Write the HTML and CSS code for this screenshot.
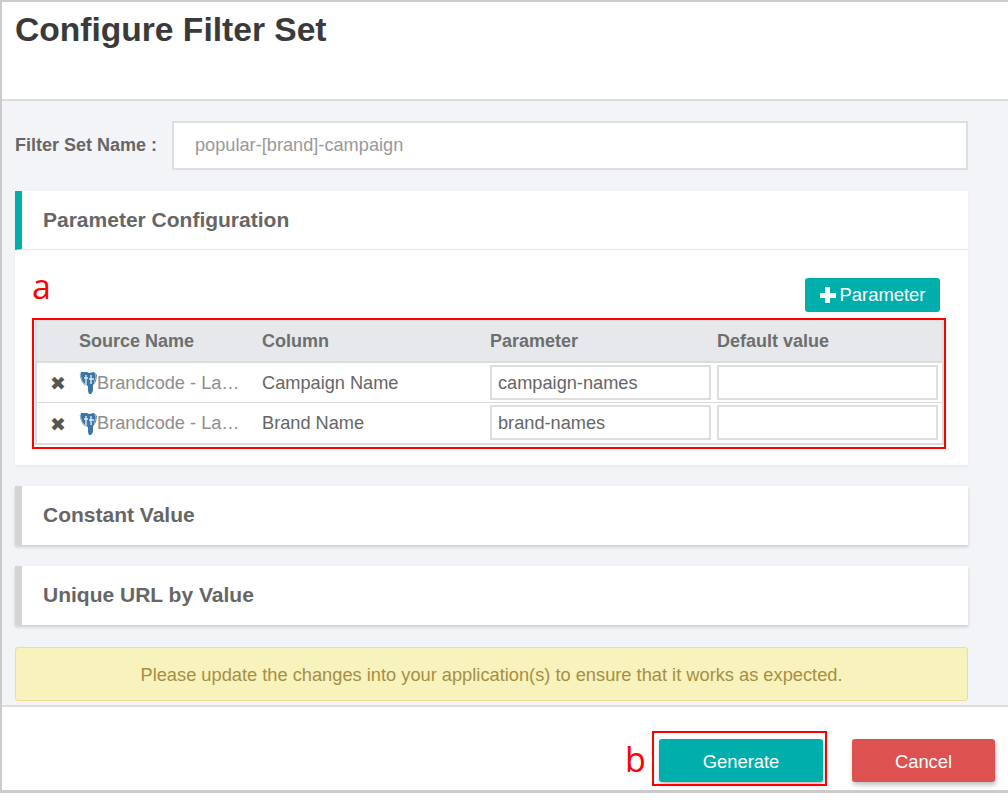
FILE: index.html
```html
<!DOCTYPE html>
<html lang="en">

<head>
	<meta charset="utf-8" />
	<title>Configure Filter Set</title>
	<link rel="stylesheet" href="styles.css">
</head>

<body>
	<div class="frame">
		<header class="top">
			<h1>Configure Filter Set</h1>
		</header>

		<main class="content">
			<div class="name-row">
				<label class="name-label">Filter Set Name :</label>
				<div class="name-input">popular-[brand]-campaign</div>
			</div>

			<section class="panel panel-open">
				<h2 class="panel-title">Parameter Configuration</h2>
				<div class="panel-body">
					<div class="toolbar">
						<button class="add-btn"><span class="plus"></span>Parameter</button>
					</div>
					<div class="params">
						<div class="param-row param-head">
							<span></span>
							<span>Source Name</span>
							<span>Column</span>
							<span>Parameter</span>
							<span>Default value</span>
						</div>
						<div class="param-row">
							<span class="cross">✖</span>
							<span class="source">
								<svg class="pg" viewBox="0 0 18 24" width="18" height="24"><path d="M2 1h6l2 1 5-1 3 3-1 6-2 3-1 1v6l-2 3h-2l-1-3v-5l-3-1-3-3-2-6z" fill="#3b76a6"/><path d="M1 3l2 7 3 3M16 2l1 4-2 6" stroke="#9db9cf" fill="none"/><path d="M7 4v11M12 4v9M5 7h4M10 8h5" stroke="#dfe9f1" stroke-width="1.4" fill="none"/></svg>
								<span class="source-name">Brandcode - La…</span>
							</span>
							<span class="col-name">Campaign Name</span>
							<div class="cell-input">campaign-names</div>
							<div class="cell-input"></div>
						</div>
						<div class="param-row">
							<span class="cross">✖</span>
							<span class="source">
								<svg class="pg" viewBox="0 0 18 24" width="18" height="24"><path d="M2 1h6l2 1 5-1 3 3-1 6-2 3-1 1v6l-2 3h-2l-1-3v-5l-3-1-3-3-2-6z" fill="#3b76a6"/><path d="M1 3l2 7 3 3M16 2l1 4-2 6" stroke="#9db9cf" fill="none"/><path d="M7 4v11M12 4v9M5 7h4M10 8h5" stroke="#dfe9f1" stroke-width="1.4" fill="none"/></svg>
								<span class="source-name">Brandcode - La…</span>
							</span>
							<span class="col-name">Brand Name</span>
							<div class="cell-input">brand-names</div>
							<div class="cell-input"></div>
						</div>
					</div>
				</div>
			</section>

			<section class="panel">
				<h2 class="panel-title">Constant Value</h2>
			</section>

			<section class="panel">
				<h2 class="panel-title">Unique URL by Value</h2>
			</section>

			<div class="notice">Please update the changes into your application(s) to ensure that it works as expected.</div>
		</main>

		<footer class="bottom">
			<button class="btn btn-generate">Generate</button>
			<button class="btn btn-cancel">Cancel</button>
		</footer>
	</div>

	<!-- red marks put on top of the screenshot -->
	<span class="mark mark-a">a</span>
	<div class="mark-box mark-box-a"></div>
	<span class="mark mark-b">b</span>
	<div class="mark-box mark-box-b"></div>
</body>

</html>
```

FILE: styles.css
```css
body {
	margin: 0;
	background: #fff;
	font-family: "Liberation Sans", Arial, sans-serif;
	color: #666;
	position: relative;
	height: 804px;
	overflow: hidden;
}

.frame {
	width: 1008px;
	height: 793px;
	box-sizing: border-box;
	border: 2px solid #cbcbcb;
	border-bottom-width: 3px;
	border-right: 0;
	display: flex;
	flex-direction: column;
	background: #fff;
}

.top {
	height: 99px;
	flex: none;
	box-sizing: border-box;
	border-bottom: 2px solid #dcdcdc;
	padding: 8px 0 0 13px;
}

h1 {
	margin: 0;
	font-size: 33.6px;
	line-height: 39px;
	font-weight: bold;
	color: #3a3a3a;
}

.content {
	height: 604px;
	flex: none;
	box-sizing: border-box;
	background: #f3f4f8;
	padding: 20px 40px 0 13px;
}

.name-row {
	display: flex;
	align-items: center;
	height: 49px;
}

.name-label {
	width: 157px;
	font-size: 18px;
	font-weight: bold;
	color: #666;
}

.name-input {
	flex: 1;
	height: 49px;
	box-sizing: border-box;
	border: 2px solid #dedfe1;
	background: #fff;
	padding-left: 21px;
	font-size: 18.2px;
	line-height: 45px;
	color: #999;
}

.panel {
	margin-top: 21px;
	border-left: 7px solid #d4d4d4;
	background: #fff;
	box-shadow: 0 2px 3px rgba(0, 0, 0, 0.16);
}

.panel-open {
	border-left: 0;
	box-shadow: 0 2px 3px rgba(0, 0, 0, 0.04);
}

.panel-title {
	margin: 0;
	height: 59px;
	box-sizing: border-box;
	padding-left: 21px;
	font-size: 21px;
	line-height: 57px;
	font-weight: bold;
	color: #666;
}

.panel-open .panel-title {
	border-left: 7px solid #00aeac;
	border-bottom: 1px solid #e4eaea;
}

.panel-body {
	height: 215px;
	box-sizing: border-box;
	padding: 28px 24px 0 20px;
}

.toolbar {
	display: flex;
	justify-content: flex-end;
	padding-right: 4px;
}

.add-btn {
	width: 135px;
	height: 34px;
	border: 0;
	border-radius: 3px;
	background: #00aeac;
	color: #fff;
	font-family: inherit;
	font-size: 18.4px;
	display: flex;
	align-items: center;
	justify-content: center;
	gap: 4px;
	padding: 0;
}

.plus {
	width: 16px;
	height: 16px;
	background:
		linear-gradient(#fff, #fff) center / 16px 5px no-repeat,
		linear-gradient(#fff, #fff) center / 5px 16px no-repeat;
}

.params {
	margin-top: 8px;
	border: 2px solid #dcdcdc;
	border-top-width: 1px;
	border-bottom-width: 2px;
	font-size: 18px;
}

.param-row {
	display: grid;
	grid-template-columns: 42px 183px 228px 227px 221px;
	align-items: center;
	height: 39px;
	border-bottom: 1px solid #dcdcdc;
}

.param-row:last-child {
	height: 40px;
	border-bottom: 0;
}

.param-head {
	height: 40px;
	background: #e6e8eb;
	border-bottom: 2px solid #dcdcdc;
	font-size: 18px;
	font-weight: bold;
	color: #6e6e6e;
}

.cross {
	margin-top: 1px;
	font-size: 19px;
	color: #555;
	text-align: center;
	font-family: "DejaVu Sans", sans-serif;
}

.source {
	display: flex;
	align-items: center;
	margin-top: 1px;
	color: #8e8e8e;
	font-size: 18.2px;
	min-width: 0;
}

.pg {
	flex: none;
}

.source-name {
	white-space: nowrap;
}

.col-name {
	margin-top: 1px;
	font-size: 18.2px;
}

.cell-input {
	width: 221px;
	height: 35px;
	align-self: start;
	margin-top: 2px;
	box-sizing: border-box;
	border: 2px solid #dedede;
	padding-left: 6px;
	line-height: 33px;
	font-size: 18.2px;
	color: #666;
	background: #fff;
}

.notice {
	margin-top: 22px;
	height: 54px;
	box-sizing: border-box;
	border: 1px solid #f3dc92;
	border-radius: 3px;
	background: #f8f2bd;
	color: #a58f45;
	font-size: 18.25px;
	line-height: 53px;
	text-align: center;
}

.bottom {
	flex: 1;
	border-top: 2px solid #dcdcdc;
	display: flex;
	justify-content: flex-end;
	align-items: flex-start;
	gap: 29px;
	padding: 32px 13px 0 0;
}

.btn {
	height: 43px;
	border: 0;
	border-radius: 3px;
	padding: 2px 0 0;
	color: #fff;
	font-family: inherit;
	font-size: 18.4px;
	box-shadow: 1px 3px 5px rgba(0, 0, 0, 0.25);
}

.btn-generate {
	width: 164px;
	background: #00aeac;
}

.btn-cancel {
	width: 143px;
	background: #de5151;
}

.mark {
	position: absolute;
	font-family: "Open Sans", sans-serif;
	font-size: 34px;
	line-height: 40px;
	color: #f00;
}

.mark-a {
	left: 32px;
	top: 266px;
}

.mark-b {
	left: 625px;
	top: 739px;
}

.mark-box {
	position: absolute;
	box-sizing: border-box;
	border: 2px solid #f00;
}

.mark-box-a {
	left: 32px;
	top: 318px;
	width: 914px;
	height: 131px;
}

.mark-box-b {
	left: 652px;
	top: 731px;
	width: 175px;
	height: 55px;
}
```
